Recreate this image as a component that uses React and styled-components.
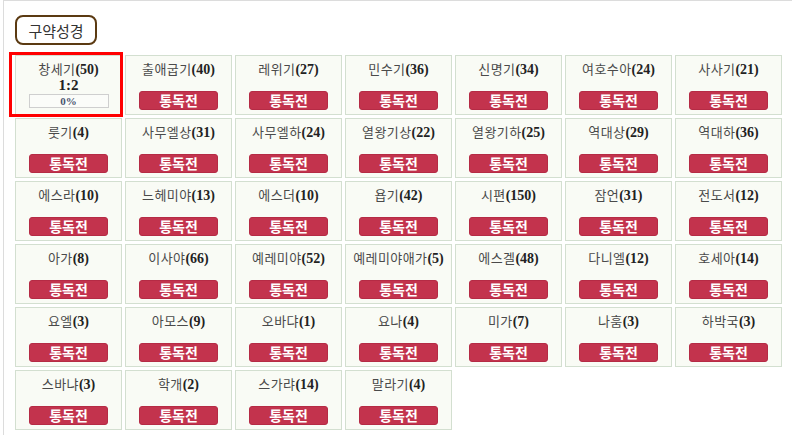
import React from "react";
import styled, { createGlobalStyle } from "styled-components";

const GlobalStyle = createGlobalStyle`
  html, body {
    margin: 0;
    padding: 0;
    background: #ffffff;
    overflow: hidden;
  }
  body {
    font-family: "Liberation Serif", "Noto Sans CJK KR", serif;
    color: #333;
  }
`;

const Page = styled.div`
  margin-left: 3px;
  border-top: 1px solid #dcdcdc;
  border-left: 1px solid #dcdcdc;
  padding: 14px 0 0 11px;
  min-height: 440px;
  box-sizing: border-box;
`;

const Tab = styled.div`
  display: inline-flex;
  align-items: center;
  justify-content: center;
  box-sizing: border-box;
  width: 82px;
  height: 30px;
  border: 2px solid #5b3a12;
  border-radius: 8px;
  font-family: "Noto Sans CJK KR", sans-serif;
  font-size: 15px;
  color: #333;
`;

const Grid = styled.div`
  margin-top: 10px;
  display: grid;
  grid-template-columns: repeat(7, 107px);
  grid-auto-rows: 60px;
  gap: 3px;
`;

const Cell = styled.div`
  position: relative;
  box-sizing: border-box;
  border: 1px solid #d3dfd0;
  background: #f9fbf5;
  display: flex;
  flex-direction: column;
  align-items: center;
  padding-top: 5px;
`;

const Title = styled.div`
  line-height: 16px;
  font-size: 13px;
  white-space: nowrap;
`;

const Name = styled.span`
  font-family: "Noto Sans CJK KR", sans-serif;
  font-weight: 400;
  font-size: 13px;
  letter-spacing: 0.4px;
  color: #4a4a4a;
`;

const Count = styled.span`
  font-family: "Liberation Serif", serif;
  font-weight: 700;
  font-size: 14px;
  color: #222;
`;

const Button = styled.div`
  margin-top: 13px;
  box-sizing: border-box;
  width: 79px;
  height: 19px;
  border-radius: 3px;
  background: #c3334d;
  border: 1px solid #b52b45;
  color: #fff;
  font-family: "Noto Sans CJK KR", sans-serif;
  font-weight: 700;
  font-size: 14px;
  line-height: 16px;
  text-align: center;
`;

const Ratio = styled.div`
  font-family: "Liberation Serif", serif;
  font-weight: 700;
  font-size: 15px;
  line-height: 14px;
  color: #222;
`;

const Progress = styled.div`
  margin-top: 2px;
  box-sizing: border-box;
  width: 80px;
  height: 14px;
  border: 1px solid #cfcfcf;
  background: #fbfcf9;
  font-family: "Liberation Serif", serif;
  font-weight: 700;
  font-size: 11px;
  line-height: 12px;
  text-align: center;
  color: #4a5470;
`;

const Highlight = styled.div`
  position: absolute;
  left: -7px;
  top: -4px;
  width: 114px;
  height: 65px;
  box-sizing: border-box;
  border: 3px solid #ff0000;
  pointer-events: none;
`;

const books = [
  ["창세기", 50],
  ["출애굽기", 40],
  ["레위기", 27],
  ["민수기", 36],
  ["신명기", 34],
  ["여호수아", 24],
  ["사사기", 21],
  ["룻기", 4],
  ["사무엘상", 31],
  ["사무엘하", 24],
  ["열왕기상", 22],
  ["열왕기하", 25],
  ["역대상", 29],
  ["역대하", 36],
  ["에스라", 10],
  ["느헤미야", 13],
  ["에스더", 10],
  ["욥기", 42],
  ["시편", 150],
  ["잠언", 31],
  ["전도서", 12],
  ["아가", 8],
  ["이사야", 66],
  ["예레미야", 52],
  ["예레미야애가", 5],
  ["에스겔", 48],
  ["다니엘", 12],
  ["호세아", 14],
  ["요엘", 3],
  ["아모스", 9],
  ["오바댜", 1],
  ["요나", 4],
  ["미가", 7],
  ["나훔", 3],
  ["하박국", 3],
  ["스바냐", 3],
  ["학개", 2],
  ["스가랴", 14],
  ["말라기", 4],
];

export default function App() {
  return (
    <>
      <GlobalStyle />
      <Page>
        <Tab>구약성경</Tab>
        <Grid>
          {books.map(([name, count], i) => (
            <Cell key={name}>
              <Title>
                <Name>{name}</Name>
                <Count>({count})</Count>
              </Title>
              {i === 0 ? (
                <>
                  <Ratio>1:2</Ratio>
                  <Progress>0%</Progress>
                  <Highlight />
                </>
              ) : (
                <Button>통독전</Button>
              )}
            </Cell>
          ))}
        </Grid>
      </Page>
    </>
  );
}
